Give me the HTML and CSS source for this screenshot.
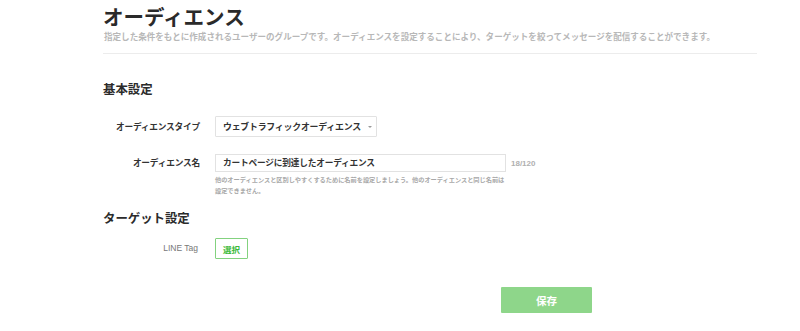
FILE: index.html
```html
<!DOCTYPE html>
<html lang="ja">
<head>
<meta charset="utf-8">
<link rel="stylesheet" href="styles.css">
</head>
<body>
<div class="page">
  <header class="head">
    <h1 class="title">オーディエンス</h1>
    <p class="lead">指定した条件をもとに作成されるユーザーのグループです。オーディエンスを設定することにより、ターゲットを絞ってメッセージを配信することができます。</p>
  </header>

  <section class="section">
    <h2 class="section-title">基本設定</h2>
    <div class="row row-type">
      <div class="label">オーディエンスタイプ</div>
      <div class="control">
        <div class="select">ウェブトラフィックオーディエンス<span class="caret"></span></div>
      </div>
    </div>
    <div class="row row-name">
      <div class="label">オーディエンス名</div>
      <div class="control">
        <div class="input-line">
          <div class="input">カートページに到達したオーディエンス</div>
          <span class="count">18/120</span>
        </div>
        <p class="help">他のオーディエンスと区別しやすくするために名前を設定しましょう。他のオーディエンスと同じ名前は<br>設定できません。</p>
      </div>
    </div>
  </section>

  <section class="section section-target">
    <h2 class="section-title">ターゲット設定</h2>
    <div class="row row-tag">
      <div class="label label-light">LINE Tag</div>
      <div class="control">
        <button class="btn-select">選択</button>
      </div>
    </div>
  </section>

  <div class="footer">
    <button class="btn-save">保存</button>
  </div>
</div>
</body>
</html>
```

FILE: styles.css
```css
* { box-sizing: border-box; }
html, body { margin: 0; padding: 0; background: #fff; }
body {
  font-family: "Noto Sans CJK JP", "Noto Sans", sans-serif;
  color: #2b2b2b;
  width: 800px;
  height: 331px;
  overflow: hidden;
}
.page {
  padding: 4px 43px 0 103px;
}
.head {
  border-bottom: 1px solid #ececec;
  padding-bottom: 10px;
}
.title {
  margin: 0;
  font-size: 20.5px;
  line-height: 24px;
  font-weight: 700;
  color: #2a2a2a;
}
.lead {
  margin: 2px 0 0 1px;
  font-size: 8.55px;
  line-height: 13px;
  font-weight: 700;
  color: #b8b8b8;
  white-space: nowrap;
}
.section { padding-top: 27px; }
.section-title {
  margin: 0;
  font-size: 12.4px;
  line-height: 16px;
  font-weight: 700;
  color: #2b2b2b;
}
.row {
  display: flex;
  align-items: flex-start;
}
.label {
  width: 97px;
  flex: none;
  text-align: right;
  font-size: 8.7px;
  font-weight: 700;
  color: #333;
  letter-spacing: -0.2px;
}
.label-light {
  font-family: "Liberation Sans", Arial, sans-serif;
  font-weight: 400;
  color: #777;
  font-size: 8.5px;
  letter-spacing: 0;
}
.control { margin-left: 15px; }
.row-type { margin-top: 19px; }
.row-type .label { line-height: 21px; }
.select {
  width: 162px;
  height: 21px;
  border: 1px solid #e2e2e2;
  border-radius: 1px;
  padding: 0 0 0 7px;
  display: flex;
  align-items: center;
  font-size: 8.9px;
  font-weight: 700;
  color: #333;
  letter-spacing: -0.2px;
}
.caret {
  margin-left: 7px;
  width: 0; height: 0;
  border-left: 2px solid transparent;
  border-right: 2px solid transparent;
  border-top: 2px solid #999;
}
.row-name { margin-top: 17px; }
.row-name .label { line-height: 18px; }
.input-line { display: flex; align-items: center; }
.input {
  width: 291px;
  height: 18px;
  border: 1px solid #e2e2e2;
  padding: 0 0 0 7px;
  font-size: 8.7px;
  line-height: 16px;
  font-weight: 700;
  color: #333;
  letter-spacing: -0.2px;
}
.count {
  margin-left: 5px;
  font-family: "Liberation Sans", Arial, sans-serif;
  font-size: 8px;
  font-weight: 700;
  color: #b0b0b0;
}
.help {
  margin: 2px 0 0 0;
  width: 310px;
  font-size: 6.2px;
  line-height: 11px;
  color: #a8a8a8;
  font-weight: 700;
}
.section-target { padding-top: 14px; }
.row-tag { margin-top: 12px; }
.row-tag .label { line-height: 20px; padding-right: 2px; }
.btn-select {
  display: block;
  width: 33px;
  height: 21px;
  border: 1px solid #83d27f;
  border-radius: 1px;
  background: #fff;
  color: #3dba3a;
  font-family: "Noto Sans CJK JP", sans-serif;
  font-size: 8.5px;
  font-weight: 700;
  padding: 0;
}
.footer {
  padding: 28px 0 0 398px;
}
.btn-save {
  display: block;
  width: 91px;
  height: 26px;
  border: none;
  border-radius: 1px;
  background: #8ed68a;
  color: #fff;
  font-family: "Noto Sans CJK JP", sans-serif;
  font-size: 10.5px;
  font-weight: 700;
  padding: 0;
}
```
